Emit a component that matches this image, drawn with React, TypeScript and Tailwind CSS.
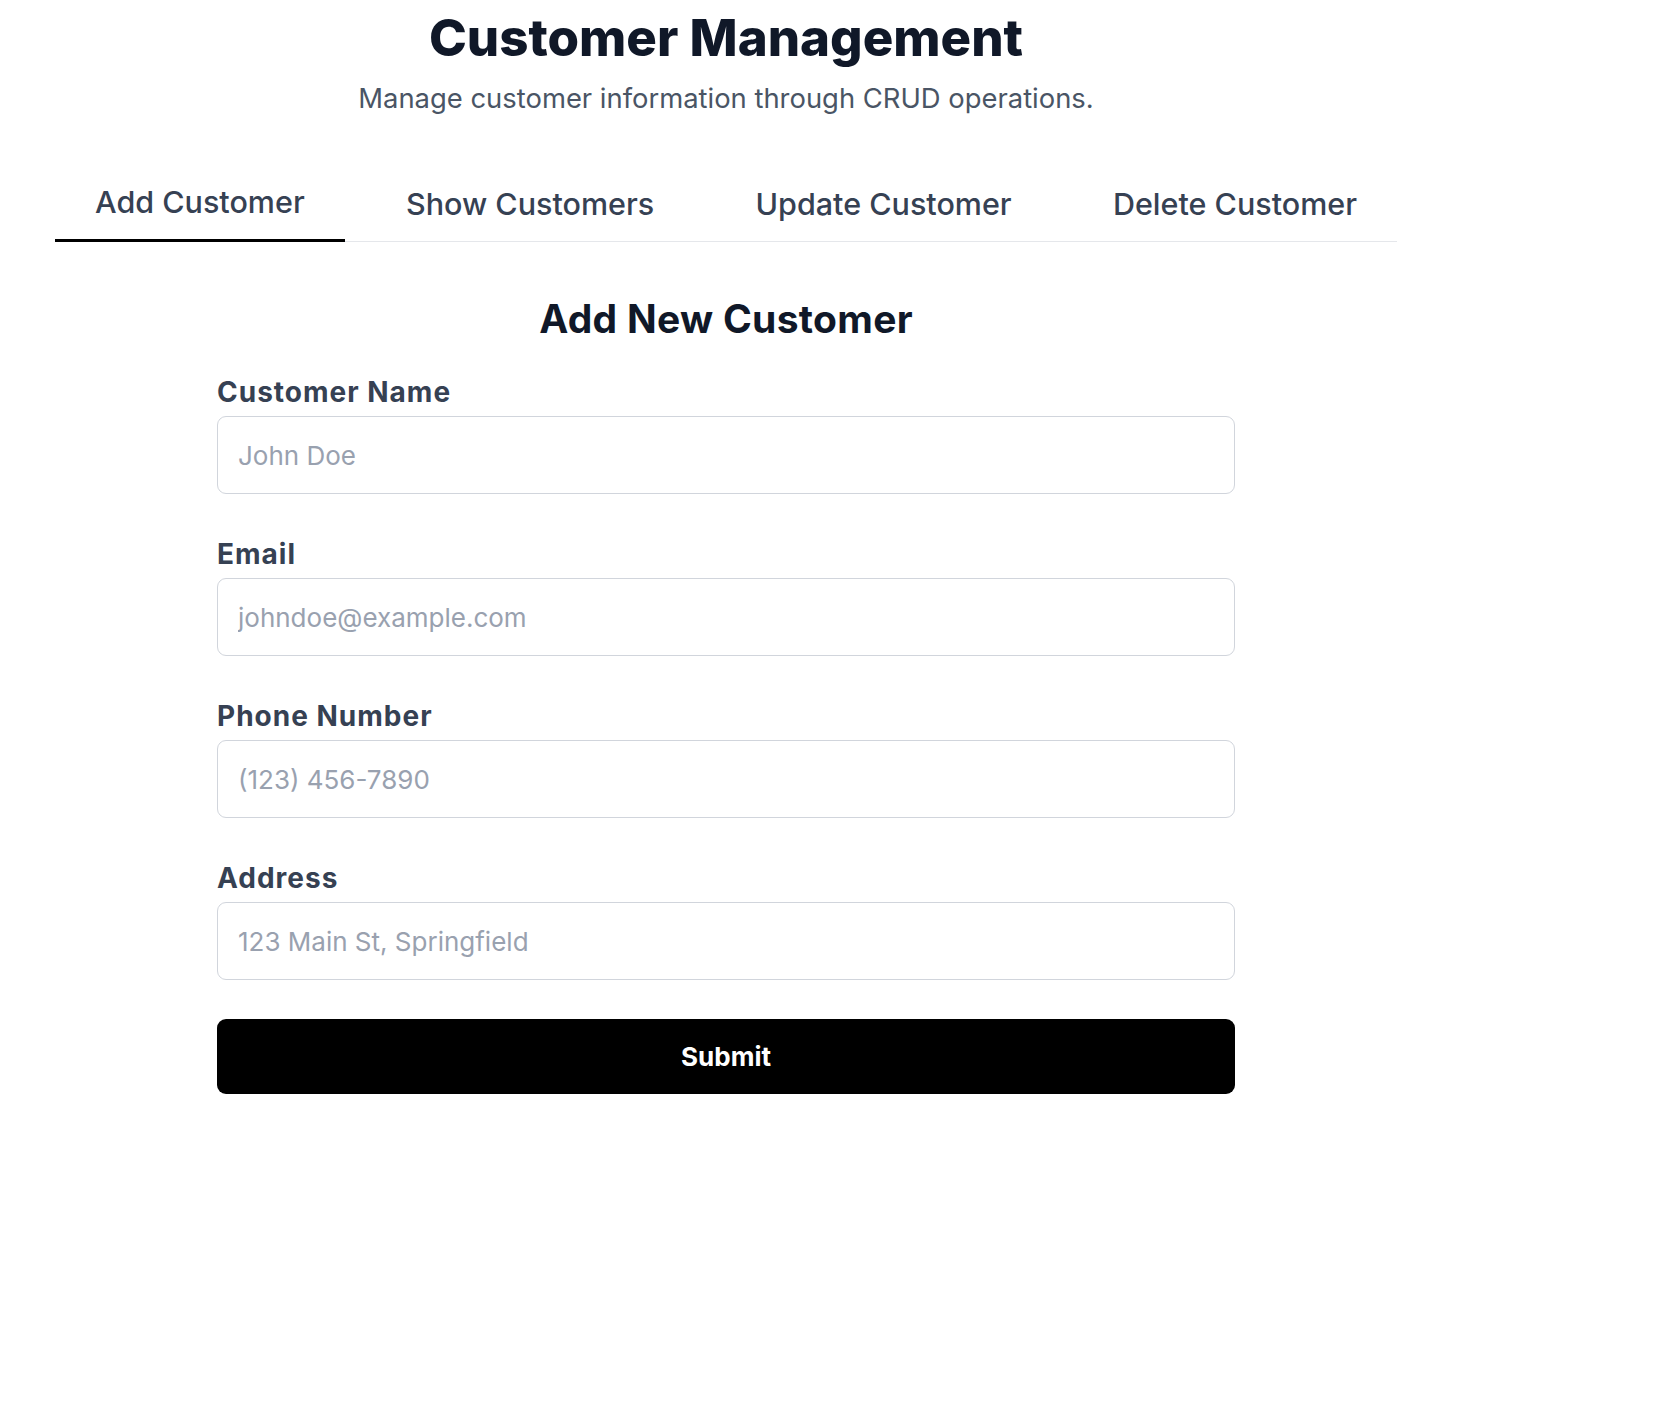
import { useState } from 'react';

const tabs = ['Add Customer', 'Show Customers', 'Update Customer', 'Delete Customer'];

const fields = [
  { id: 'name', label: 'Customer Name', type: 'text', placeholder: 'John Doe' },
  { id: 'email', label: 'Email', type: 'email', placeholder: 'johndoe@example.com' },
  { id: 'phone', label: 'Phone Number', type: 'tel', placeholder: '(123) 456-7890' },
  { id: 'address', label: 'Address', type: 'text', placeholder: '123 Main St, Springfield' },
];

function AddCustomerForm() {
  return (
    <div className="mx-auto w-[1018px]">
      <h2 className="text-center text-[39px] leading-[46px] font-bold tracking-[0.3px] text-gray-900">
        Add New Customer
      </h2>
      <form className="mt-[32px] flex flex-col" onSubmit={(e) => e.preventDefault()}>
        {fields.map((field, i) => (
          <div
            key={field.id}
            className={
              i === fields.length - 1
                ? 'mb-[39px] flex flex-col gap-[6px]'
                : 'mb-[42px] flex flex-col gap-[6px]'
            }
          >
            <label
              htmlFor={field.id}
              className="text-[28px] leading-[36px] font-bold tracking-[1px] text-gray-700"
            >
              {field.label}
            </label>
            <input
              id={field.id}
              type={field.type}
              placeholder={field.placeholder}
              className="h-[78px] rounded-[9px] border border-gray-300 px-[20px] text-[26px] text-gray-900 outline-none placeholder:text-gray-400"
            />
          </div>
        ))}
        <button
          type="submit"
          className="h-[75px] rounded-[9px] bg-black text-[26px] font-bold text-white"
        >
          Submit
        </button>
      </form>
    </div>
  );
}

export default function App() {
  const [active, setActive] = useState(0);

  return (
    <div className="min-h-[1408px] bg-white font-['Inter',sans-serif]">
      <div className="ml-[55px] w-[1342px] pt-[12px]">
        <h1 className="text-center text-[51px] leading-[52px] font-extrabold text-gray-900">
          Customer Management
        </h1>
        <p className="mt-[16px] text-center text-[27.4px] leading-[36px] text-gray-600">
          Manage customer information through CRUD operations.
        </p>

        <div className="mt-[58px] flex justify-between border-b border-gray-200">
          {tabs.map((tab, i) => (
            <button
              key={tab}
              onClick={() => setActive(i)}
              className={
                i === active
                  ? '-mb-px border-b-[3px] border-black px-10 pt-[8px] pb-[17px] text-[30.5px] leading-[40px] font-medium text-gray-700'
                  : '-mb-px border-b-[3px] border-transparent px-10 pt-[10px] pb-[15px] text-[30.5px] leading-[40px] font-medium text-gray-700'
              }
            >
              {tab}
            </button>
          ))}
        </div>

        <div className="mt-[54px]">{active === 0 && <AddCustomerForm />}</div>
      </div>
    </div>
  );
}
